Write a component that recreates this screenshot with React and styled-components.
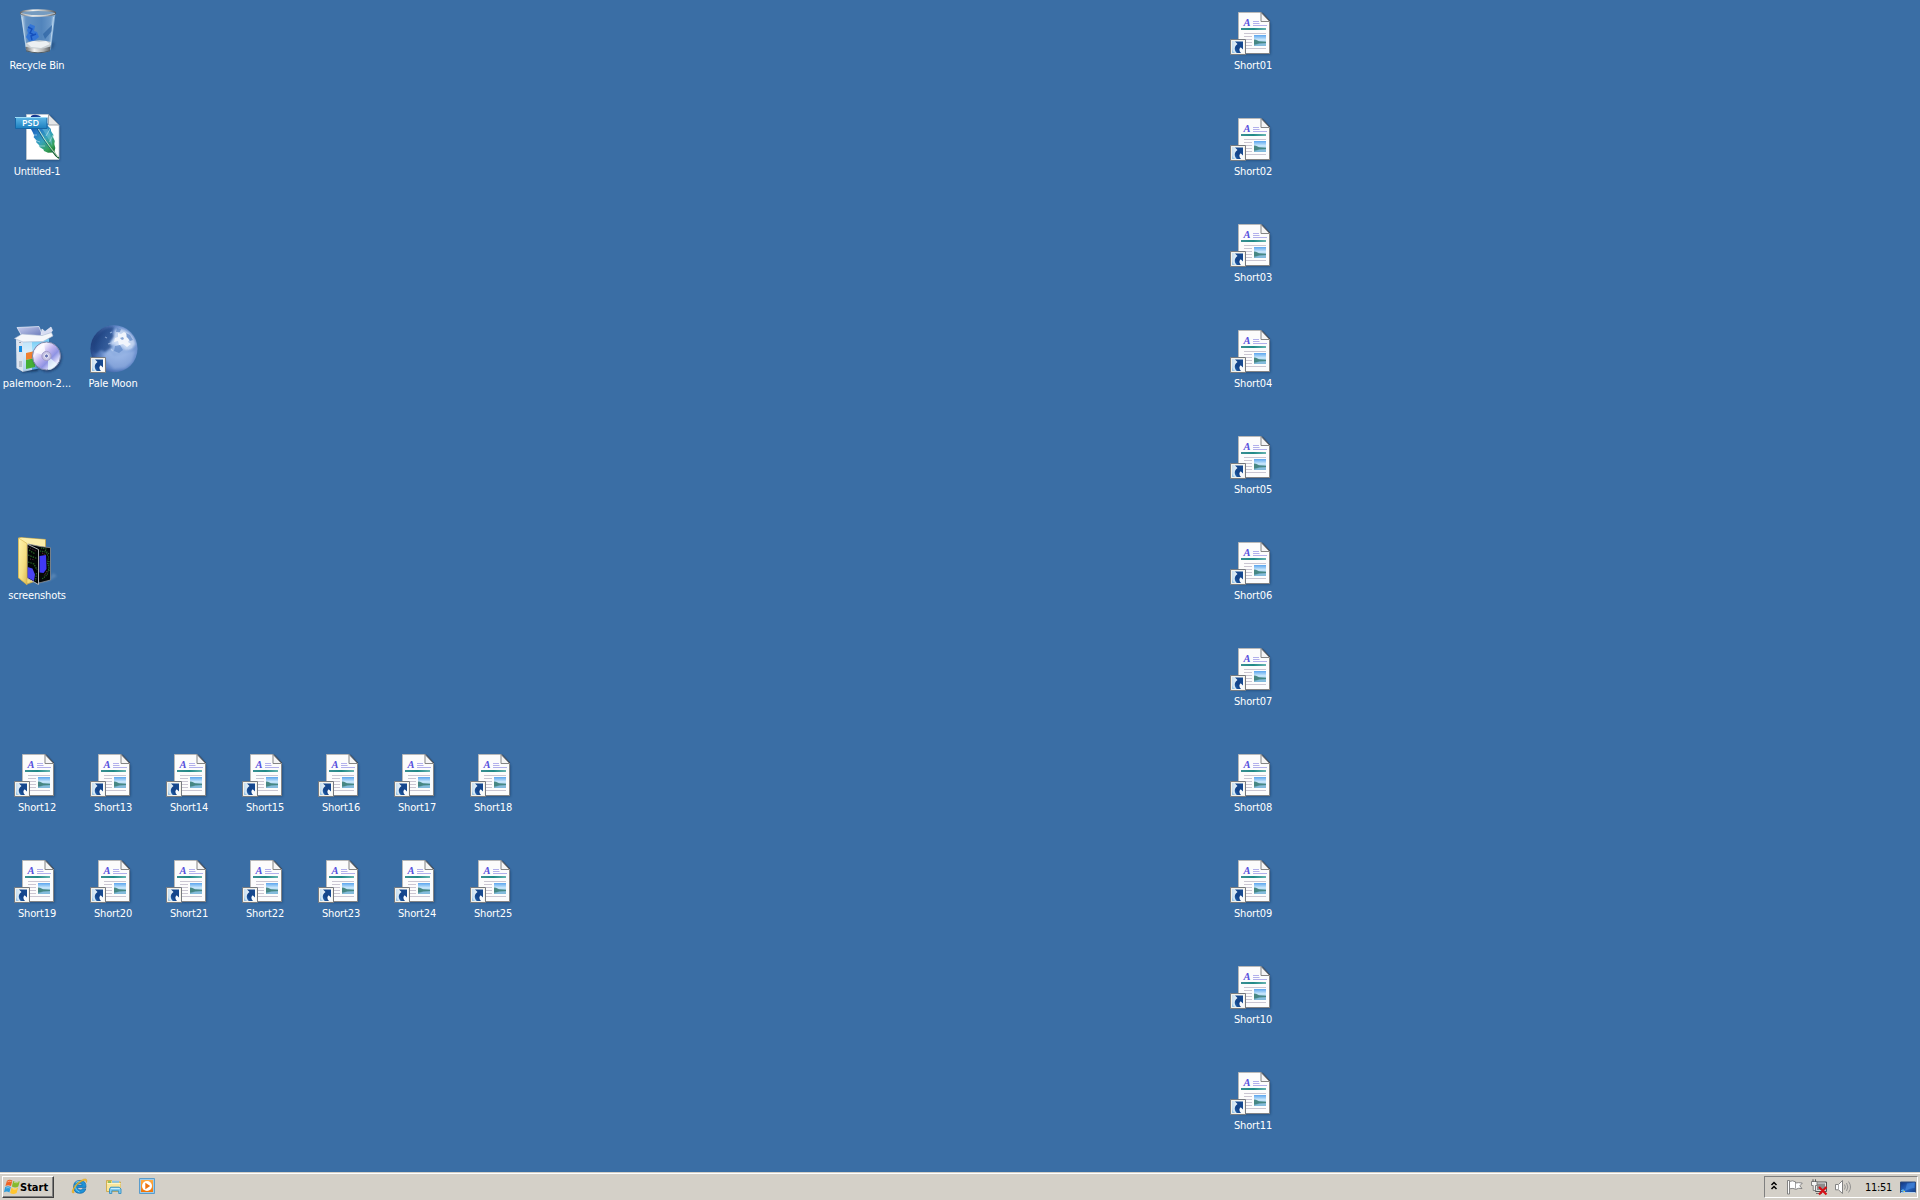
import React from "react";
import styled, { createGlobalStyle } from "styled-components";

const GlobalStyle = createGlobalStyle`
  *, *::before, *::after { box-sizing: border-box; }
  body { margin: 0; overflow: hidden; background: #3a6ea5; }
`;

const Screen = styled.div`
  display: flex;
  flex-direction: column;
  width: 1920px;
  height: 1200px;
  background: #3a6ea5;
  font-family: "DejaVu Sans Condensed", "DejaVu Sans", sans-serif;
  font-size: 11px;
  user-select: none;
`;

const Desktop = styled.main`
  flex: 1;
  min-height: 0;
  display: grid;
  grid-template-columns: repeat(25, 76px);
  grid-template-rows: repeat(11, 106px);
`;

const Shortcut = styled.div`
  grid-column: ${(p) => p.$col};
  grid-row: ${(p) => p.$row};
  display: flex;
  flex-direction: column;
  align-items: center;
  padding-top: 7px;
`;

const IconSvg = styled.svg`
  display: block;
  flex: none;
  width: 48px;
  height: 48px;
  overflow: visible;
`;

const Label = styled.span`
  margin: 4px 2px 0 0;
  color: #fff;
  line-height: 14px;
  white-space: nowrap;
  letter-spacing: ${(p) => p.$spacing ?? -0.15}px;
`;

const Taskbar = styled.footer`
  flex: none;
  height: 28px;
  display: flex;
  align-items: flex-start;
  padding: 3px 2px 0;
  background: #d4d0c8;
  border-top: 1px solid #d4d0c8;
  box-shadow: inset 0 1px 0 #fff;
`;

const StartButton = styled.button`
  display: flex;
  align-items: center;
  width: 52px;
  height: 22px;
  padding: 0 0 0 1px;
  background: #d4d0c8;
  border: 1px solid;
  border-color: #fff #404040 #404040 #fff;
  box-shadow: inset -1px -1px 0 #808080;
  color: #000;
  font: bold 11px "DejaVu Sans Condensed", "DejaVu Sans", sans-serif;
  letter-spacing: 0;
`;

const QuickLaunch = styled.nav`
  display: flex;
  align-items: center;
  gap: 17.5px;
  height: 22px;
  padding-bottom: 2px;
  margin-left: 18px;
`;

const SmallSvg = styled.svg`
  display: block;
  flex: none;
  width: ${(p) => p.$w ?? 16}px;
  height: 16px;
  overflow: visible;
`;

const Tray = styled.div`
  display: flex;
  align-items: center;
  width: 154px;
  height: 22px;
  margin-left: auto;
  padding-left: 5px;
  border: 1px solid;
  border-color: #808080 #fff #fff #808080;
`;

const TrayIcons = styled.div`
  display: flex;
  align-items: center;
  gap: 8px;
`;

const Clock = styled.time`
  margin-left: 14px;
  width: 28px;
  color: #000;
  line-height: 14px;
  padding-top: 1px;
  white-space: nowrap;
  letter-spacing: -0.3px;
`;

const ShowDesktop = styled.div`
  margin-left: 7px;
`;

const DefsSvg = styled.svg`
  position: absolute;
`;

function Defs() {
  return (
    <DefsSvg width="0" height="0" aria-hidden="true">
      <defs>
        <linearGradient id="glass" x1="0" x2="1">
          <stop offset="0" stopColor="#d7e8f6" stopOpacity=".8" />
          <stop offset=".18" stopColor="#81aad4" stopOpacity=".7" />
          <stop offset=".6" stopColor="#5e91c9" stopOpacity=".6" />
          <stop offset="1" stopColor="#a9cbea" stopOpacity=".8" />
        </linearGradient>
        <linearGradient id="metal" x1="0" x2="1">
          <stop offset="0" stopColor="#666b70" />
          <stop offset=".35" stopColor="#f4f4f2" />
          <stop offset=".7" stopColor="#b1b4b5" />
          <stop offset="1" stopColor="#555b61" />
        </linearGradient>
        <linearGradient id="teal" x1="0" x2="1">
          <stop offset="0" stopColor="#3a8f92" />
          <stop offset=".5" stopColor="#208a87" />
          <stop offset="1" stopColor="#65b5b0" />
        </linearGradient>
        <linearGradient id="photo" x1="0" y1="0" x2="0" y2="1">
          <stop offset="0" stopColor="#5aa5ee" />
          <stop offset=".45" stopColor="#cdeafc" />
          <stop offset=".62" stopColor="#9ccbe8" />
          <stop offset="1" stopColor="#6aaee0" />
        </linearGradient>
        <linearGradient id="banner" x1="0" y1="0" x2="0" y2="1">
          <stop offset="0" stopColor="#5cb6e6" />
          <stop offset="1" stopColor="#1c7fbf" />
        </linearGradient>
        <linearGradient id="feather" x1=".1" y1="0" x2=".7" y2="1">
          <stop offset="0" stopColor="#12308a" />
          <stop offset=".35" stopColor="#2479c6" />
          <stop offset=".58" stopColor="#36a3bb" />
          <stop offset=".8" stopColor="#35a05a" />
          <stop offset="1" stopColor="#0f5c22" />
        </linearGradient>
        <linearGradient id="arrow" x1="1" y1="0" x2="0" y2="1">
          <stop offset="0" stopColor="#164a91" />
          <stop offset=".65" stopColor="#144489" />
          <stop offset="1" stopColor="#246ab6" />
        </linearGradient>
        <linearGradient id="arrowTile">
          <stop offset="0" stopColor="#bcd8ee" />
          <stop offset=".6" stopColor="#f8fbfd" />
        </linearGradient>
        <radialGradient id="moon" cx=".58" cy=".45" r=".62">
          <stop offset="0" stopColor="#a4c0ea" />
          <stop offset=".45" stopColor="#80a2da" />
          <stop offset=".78" stopColor="#6388c8" />
          <stop offset="1" stopColor="#34599c" />
        </radialGradient>
        <linearGradient id="moonShade" x1="0" y1=".2" x2=".9" y2=".6">
          <stop offset="0" stopColor="#0f2860" stopOpacity=".9" />
          <stop offset=".5" stopColor="#28569c" stopOpacity="0" />
        </linearGradient>
        <linearGradient id="disc" x1="0" y1="0" x2="1" y2="1">
          <stop offset="0" stopColor="#a69de7" />
          <stop offset=".25" stopColor="#f9f5ff" />
          <stop offset=".45" stopColor="#c0b4ef" />
          <stop offset=".62" stopColor="#8e93e3" />
          <stop offset=".8" stopColor="#e9e9ff" />
          <stop offset="1" stopColor="#a1b8ee" />
        </linearGradient>
        <linearGradient id="box" x1="0" y1="0" x2="0" y2="1">
          <stop offset="0" stopColor="#65c6f3" />
          <stop offset=".45" stopColor="#bae9ff" />
          <stop offset="1" stopColor="#4c9bd8" />
        </linearGradient>
        <linearGradient id="flap" x1="0" y1="0" x2="1" y2="1">
          <stop offset="0" stopColor="#c9d0f0" />
          <stop offset="1" stopColor="#5f70b4" />
        </linearGradient>
        <linearGradient id="folder" x1="0" y1="0" x2="1" y2="1">
          <stop offset="0" stopColor="#fff3ae" />
          <stop offset=".6" stopColor="#f5df83" />
          <stop offset="1" stopColor="#dcb84e" />
        </linearGradient>
        <linearGradient id="screenBlue" x1="0" y1="0" x2="1" y2="1">
          <stop offset="0" stopColor="#12347c" />
          <stop offset=".55" stopColor="#2768c8" />
          <stop offset="1" stopColor="#153d80" />
        </linearGradient>
        <linearGradient id="media" x1="0" y1="0" x2="0" y2="1">
          <stop offset="0" stopColor="#ffad45" />
          <stop offset="1" stopColor="#f17407" />
        </linearGradient>
        <filter id="soft" x="-30%" y="-30%" width="160%" height="160%">
          <feGaussianBlur stdDeviation=".8" />
        </filter>
      </defs>
    </DefsSvg>
  );
}

function ShortcutArrow() {
  return (
    <g>
      <path d="M.5 32.500h15v15H.5z" fill="url(#arrowTile)" stroke="#777b80" />
      <path d="M1.500 33.500h13v13h-13z" fill="none" stroke="#f6f3ea" />
      <path d="M5 34.500h8v8l-2.300-2.300c-1.800 1.500-1.800 3.500.3 5.800H6.800C4 43.300 4 39.500 7.500 37z" fill="url(#arrow)" />
      <path d="M2 40.500c.2 3.200 1.200 5 4 5.500H2z" fill="#99c5e7" />
    </g>
  );
}

function DocumentIcon() {
  return (
    <IconSvg viewBox="0 0 48 48">
      <path d="M10 7h23l7.500 9v31.500H10z" fill="#173459" opacity=".6" filter="url(#soft)" />
      <path d="M8.500 5.500H31l8.500 9v32h-31z" fill="#fcfcfc" stroke="#b8b8b8" />
      <path d="M8 46.500h32M39.500 15v32" stroke="#858585" />
      <path d="M31 5.500v9h8.500z" fill="#f5f5f5" stroke="#858585" />
      <path d="M32 5.500l8 8.500" stroke="#3c4654" strokeWidth=".9" />
      <text x="13.500" y="19" fill="#564fdc" fontFamily="Liberation Serif, serif" fontSize="10.500" fontStyle="italic" fontWeight="bold">A</text>
      <path d="M23 14.500h6M23 16.500h6.500M23 18.500h14" stroke="#a9a7ea" strokeWidth=".9" />
      <rect x="11" y="21" width="25" height="2" fill="url(#teal)" />
      <path d="M14 26.500h22M14 29.500h8M14 32.500h8M14 35.500h8M14 38.500h8M16 41.500h20" stroke="#cac6d2" />
      <rect x="24" y="28" width="12" height="11" fill="url(#photo)" />
      <path d="M24 32.500l2 .2 3 1.500 7 .6v1.400l-7 .6-5 2z" fill="#3d8078" opacity=".9" />
      <path d="M24 37.500l5-1 7-.3v2.800H24z" fill="#8cc0d8" opacity=".6" />
      <ShortcutArrow />
    </IconSvg>
  );
}

function RecycleIcon() {
  return (
    <IconSvg viewBox="0 0 48 48">
      <path d="M34 41l5 1 2-6-3-1z" fill="#204b7b" opacity=".6" filter="url(#soft)" />
      <path d="M6.500 6L12 43q1 3 12.500 3T37 42L41.500 6z" fill="url(#glass)" />
      <path d="M10 8h28l-4 33H14z" fill="#5487bd" opacity=".4" />
      <path d="M38 18l-9 9 2 5 7-8z" fill="#285f9f" opacity=".65" />
      <path d="M16 17l5 2-1 5 3 1 2 5-5 4h-5l-3-4 2-4-1-3z" fill="#2f72d8" opacity=".9" />
      <path d="M14 20l4 2-2 4 4 2M18 33l-1-4 5-2" fill="none" stroke="#1550bd" strokeWidth="1.400" />
      <path d="M12 36q12-5 25-1l-1 7q-3 3-12 3t-12-3z" fill="#c8cfd3" />
      <path d="M13 36l7-2 5 1 7-1 4 3-9 4-10-1z" fill="#f0f3f5" opacity=".9" />
      <path d="M11.500 39.500q12.500 4.500 25 0l-.6 4.500q-11.700 4-23.400 0z" fill="url(#metal)" />
      <path d="M12 43.800q12 4 24 0" fill="none" stroke="#525e66" />
      <ellipse cx="24" cy="6" rx="17.300" ry="2.900" fill="#759bc0" stroke="url(#metal)" strokeWidth="1.800" />
      <path d="M7 6.500q17 5 34-.2" stroke="#d9dddf" strokeWidth=".7" fill="none" />
      <path d="M8 10l4 30M39.500 10l-3 28" stroke="#d7ebf9" strokeWidth=".8" opacity=".8" />
    </IconSvg>
  );
}

function PsdIcon() {
  return (
    <IconSvg viewBox="0 0 48 48">
      <path d="M13 3h24l9 11v33.500H13z" fill="#173459" opacity=".6" filter="url(#soft)" />
      <path d="M12.500 1.500h22l10.500 10.500v34.500H12.500z" fill="#fff" stroke="#c3cad0" strokeWidth=".8" />
      <path d="M34.500 1.500V12H45z" fill="#e4e6e8" stroke="#8b929b" strokeWidth=".8" />
      <path d="M17 3q3-2 8-.5 4 2 6 5.500l3 3-.5 1.500L37 16l0 2 2.500 4-.5 2 1.800 4-.5 3 1 4-.8 3.500q2 4 5 6.500l-1 .8q-4-3-6-6.300l-4.500.2-4-1.600-.5-1.500-4-2.500-.5-2-3-3 .5-1.500-3-3.500.8-1.200-1.500-3.500Q14.500 14 17 3z" fill="url(#feather)" />
      <path d="M29 10q9 9 9.500 24Q33 22 26 13z" fill="#83cfe6" opacity=".4" />
      <path d="M20 9q7 17 24 35.500" fill="none" stroke="#0f4a6a" strokeWidth=".9" opacity=".7" />
      <path d="M21 9q7 16 23 35" fill="none" stroke="#e6f6d0" strokeWidth=".8" />
      <path d="M36 16l-4 7M39 22l-3.500 7M18 22l5 0M20 27l6 2M24 33l7 0" stroke="#e2f5f8" strokeWidth=".7" opacity=".7" />
      <path d="M1.500 4.500h31.500v11h-31.500z" fill="url(#banner)" stroke="#1766a5" />
      <path d="M1 4.500h32" stroke="#9edcf7" />
      <text x="8" y="13.200" fill="#fff" fontFamily="Open Sans, sans-serif" fontSize="9" fontWeight="600" textLength="17">PSD</text>
    </IconSvg>
  );
}

function InstallerIcon() {
  return (
    <IconSvg viewBox="0 0 48 48">
      <path d="M6 13L24 14v32L8 47.500z" fill="#183961" filter="url(#soft)" />
      <path d="M3 2.500L25 1.500l3.500 9L9 13z" fill="url(#flap)" stroke="#eef0fb" strokeWidth=".7" />
      <path d="M27 10l1-6 3 2.500L37 2l1.500 3.500L35 10z" fill="#d7dcf2" stroke="#f4f5fc" strokeWidth=".6" />
      <path d="M3 14l7-1 25 1v28l-18 3-8 1z" fill="url(#box)" />
      <path d="M2 13l7 3v31l-6.500-4z" fill="#dce4ef" />
      <path d="M9 16v31l9-2V17z" fill="#eef4fb" opacity=".6" />
      <path d="M.5 13.500L8 9l20 1.500 9.500-3 1.500 3.500-10 5.500-20 .5z" fill="#f5f7fa" stroke="#a7b7d2" strokeWidth=".6" />
      <path d="M5 21h3v6H5z" fill="#148ce1" />
      <path d="M5 17.500h2M5 37h3M5 39h3M5 41h3" stroke="#818a9a" strokeWidth=".8" />
      <path d="M12 28l9-2v7l-9 2z" fill="#f0802f" />
      <path d="M12 35l9-2v9l-9 2z" fill="#45af35" />
      <circle cx="33.500" cy="32.500" r="14.200" fill="#1b3764" opacity=".8" filter="url(#soft)" />
      <circle cx="32.500" cy="31" r="14" fill="url(#disc)" stroke="#7f88a8" />
      <path d="M20 27q3-8 10-9l2 13z" fill="#fff" opacity=".7" />
      <path d="M34 31l9 8q-4 6-9 6z" fill="#ebfcff" opacity=".7" />
      <circle cx="32.500" cy="31" r="4.600" fill="#c6c2e4" stroke="#9f9bc6" />
      <circle cx="32.500" cy="31" r="2" fill="#626db1" stroke="#fff" strokeWidth=".8" />
    </IconSvg>
  );
}

function MoonIcon() {
  return (
    <IconSvg viewBox="0 0 48 48">
      <circle cx="24" cy="23.800" r="23.500" fill="url(#moon)" />
      <path d="M8 9q8-8 16-7l-2 6 3 3-5 6 2 5-7 5-4-2-6 4-3-4q0-10 6-16z" fill="#1f4484" opacity=".75" filter="url(#soft)" />
      <path d="M25 5q7-3 13 2 6 5 7.500 12l-4 5-6 1-4-4-5 1-2-3-5 1 3-5 1-3z" fill="#dfeafb" opacity=".7" filter="url(#soft)" />
      <path d="M28 8l3 1 3-2 3 2-1 3 4 2-2 3 3 2-4 3-4-3-4 1-1-4-4 1 1-4 3-1z" fill="#fff" opacity=".75" />
      <path d="M25 21l5-1 3 5-4 3-5-2zM36 8l4 2 3 5-3 1-3-4zM27 3l4 1-1 3-4 0zM30 13l3-1 1 2-2 1z" fill="#5d86c4" opacity=".7" />
      <path d="M12 29l8-3 4 5 6-1 6-3 9-1-3 11-7 6-11 1-6-6z" fill="#b4caf2" opacity=".35" filter="url(#soft)" />
      <path d="M15 12l2 1M18 19l3-1M21 24l2 2M38 24l4-2M20 8l2-1" fill="none" stroke="#b9d0f0" strokeWidth="1.200" opacity=".8" />
      <circle cx="24" cy="23.800" r="23.500" fill="url(#moonShade)" />
      <ShortcutArrow />
    </IconSvg>
  );
}

function FolderIcon() {
  return (
    <IconSvg viewBox="0 0 48 48">
      <path d="M23 46l12-4 4-6 4 3-8 5z" fill="#6a94c0" opacity=".6" filter="url(#soft)" />
      <path d="M4.500 1l2-.5L31.500 2.500v38L13 47 4.500 41z" fill="url(#folder)" stroke="#c8a84b" strokeWidth=".8" />
      <path d="M7 .8l24 2v8L13 7z" fill="#fbeeaa" />
      <path d="M14 7l12.500 2.500 10 1.200V43L25 46z" fill="#050807" stroke="#8d9297" strokeWidth=".8" />
      <path d="M25.500 19l6.500-1 .5 14-3 4-4-.5z" fill="#3f39f6" />
      <path d="M26 14l6 1 2.500 5-1 6 1.500 5-2 7-5 4M31 13l4 4M35 24v10M27 11l6 1" fill="none" stroke="#2a6b2c" strokeWidth="1.100" strokeDasharray="1.200 1" />
      <path d="M28 16l4 2M33 34l-3 5" stroke="#7a3446" strokeDasharray="1 1" />
      <path d="M13 7l11.500 5.500V47.500L13 41z" fill="#020505" stroke="#c2c4c6" strokeWidth=".9" />
      <path d="M13.500 30l5 1.500 2.500 6-1 6.500-6.500-3.500z" fill="#4a44f4" />
      <path d="M14 18l9 3.500M15 13l6 4M14 25l6 2 3 6M22.500 36l-1 8" fill="none" stroke="#2a6726" strokeWidth="1.200" strokeDasharray="1.500 1" />
      <path d="M14 10l8 4M16 22l5 1" stroke="#63303f" strokeDasharray="1 1.500" />
      <path d="M4.500 1L13 6.500V48l-8.500-7.500z" fill="url(#folder)" stroke="#d0ae4c" strokeWidth=".6" />
    </IconSvg>
  );
}

function WindowsFlag() {
  return (
    <SmallSvg viewBox="0 0 16 16">
      <path d="M3 1.800Q5.500 0 8.400 1.600L7 7.100Q4.200 5.600 1.400 7z" fill="#ee6325" />
      <path d="M9.200 2.100q3.300 1.800 6.600.1l-1.500 5.400q-3 1.700-6.400 0z" fill="#86b92e" />
      <path d="M1.200 7.900q2.900-1.400 5.600.1l-1.400 5.400Q2.800 11.900 0 13.300z" fill="#2d9cdb" />
      <path d="M7.600 8.500q3.200 1.800 6.500.1l-1.500 5.300q-3.200 1.900-6.500.1z" fill="#ffc52f" />
      <path d="M3.500 2.800q2-1 4-.2M10 3.300q2 .8 4.300.2M2.200 9q2-1 3.600 0M8.500 9.700q2 .8 4.300.1" fill="none" stroke="#fff" strokeWidth=".7" opacity=".6" />
    </SmallSvg>
  );
}

function ExplorerIcon() {
  return (
    <SmallSvg viewBox="0 0 16 16">
      <path d="M14 9.400H5.300q.4 2.600 2.900 2.600 1.600 0 2.300-1.200h3.300Q12.600 15.300 8 15.300 1.600 15.300 1.600 8.900 1.600 2.400 8.100 2.400q6.200 0 5.900 7zM5.400 7.100h4.900Q9.800 5.200 8 5.200 5.900 5.200 5.400 7.100z" fill="#1e93d8" stroke="#0a62a8" strokeWidth=".7" />
      <path d="M3.800 4.500Q6 2.900 9 3.400M3.200 7q.3 6 4.300 7" stroke="#77d3f7" fill="none" />
      <path d="M2.200 14.800Q-1 15.700.7 11.500 4 4.200 11.500 1.200 15.900-.2 14.500 4.500 14.500 1.800 11.800 2.500 5.800 4.600 2.600 10.300 1 13.600 2.200 14.800z" fill="#f4bd26" stroke="#d39310" strokeWidth=".4" />
    </SmallSvg>
  );
}

function LibraryIcon() {
  return (
    <SmallSvg viewBox="0 0 16 16">
      <path d="M.5 2.500h5L7 4h7.500v9.500H.5z" fill="#f4d573" stroke="#c9a443" strokeWidth=".8" />
      <path d="M6 2.800h7v2H6z" fill="#8cc5e8" />
      <path d="M2 3.300h3v1.500H2z" fill="#73b957" />
      <path d="M1 5.500h13.500v7.500H1z" fill="#fbe69a" />
      <path d="M1 5.500h13.500" stroke="#fff6c8" />
      <path d="M3.500 15.500v-4.500l1.200-1.800h8.600l1.700 1.800v4.500h-2.300v-2.700H5.800v2.700z" fill="#81cbee" stroke="#348fc3" strokeWidth=".9" />
      <path d="M4.800 10.500h9" stroke="#d9f6ff" strokeWidth=".8" />
    </SmallSvg>
  );
}

function MediaIcon() {
  return (
    <SmallSvg viewBox="0 0 16 16">
      <path d="M.5.5h15v15H.5z" fill="#9ccbea" stroke="#5a9ccc" />
      <path d="M2 2h12v12H2z" fill="url(#media)" />
      <circle cx="8" cy="8" r="5" fill="#fff" />
      <path d="M6.300 4.800L11.200 8l-4.900 3.200z" fill="#ef7510" />
    </SmallSvg>
  );
}

function TrayChevron() {
  return (
    <SmallSvg $w={9} viewBox="0 0 9 16">
      <path d="M1.500 6L4 3.500 6.500 6M1.500 10L4 7.500 6.500 10" stroke="#000" strokeWidth="1.500" fill="none" />
    </SmallSvg>
  );
}

function FlagIcon() {
  return (
    <SmallSvg viewBox="0 0 16 16">
      <path d="M.5 1.500h2v13.500h-2z" fill="#fff" stroke="#777" strokeWidth=".9" />
      <path d="M2.500 2.500q3-1.500 6 .3V4q3-.8 6.800.1L12.800 6.800 15 9.500q-4-.8-6 .8-3-1.500-6.500-.5z" fill="#fff" stroke="#7b7b7b" strokeWidth=".9" />
      <path d="M8.500 4v5.500" stroke="#999" strokeWidth=".9" />
    </SmallSvg>
  );
}

function NetworkIcon() {
  return (
    <SmallSvg viewBox="0 0 16 16">
      <path d="M4.500 3h11v9.500h-11z" fill="#8d8d8d" stroke="#555" />
      <path d="M5.500 4h9v7.500h-9z" fill="none" stroke="#ececec" strokeWidth=".9" />
      <path d="M.5 2.500h5.500v4H4.500v5H2.200v-5H.5z" fill="#f3f3f3" stroke="#777" strokeWidth=".9" />
      <path d="M2 .3v2.500M4.500.3v2.500" stroke="#555" />
      <path d="M5 14.500h6" stroke="#777" />
      <path d="M8 8l7.500 7.500M15.500 8L8 15.500" stroke="#d61016" strokeWidth="2.200" />
    </SmallSvg>
  );
}

function SpeakerIcon() {
  return (
    <SmallSvg viewBox="0 0 16 16">
      <path d="M.5 5.500h3L7.500 1.500v13L3.500 10.800h-3z" fill="#fff" stroke="#777" strokeWidth=".9" />
      <path d="M3.500 5.500v5" stroke="#aaa" />
      <path d="M9.500 5.500q1.600 2.500 0 5M11.500 4q2.700 4 0 8M13.500 2.500q4 5.500 0 11" fill="none" stroke="#8a8a8a" strokeWidth=".9" />
    </SmallSvg>
  );
}

function DesktopIcon() {
  return (
    <SmallSvg viewBox="0 0 16 16">
      <path d="M.5 3h15v10.500H.5z" fill="url(#screenBlue)" stroke="#2c4a7c" />
      <path d="M7 4.500l7.500-1v5.500Q11 9 5 12z" fill="#4b8bdb" opacity=".6" />
      <path d="M1 13.500h14.500" stroke="#b7d3ee" />
      <path d="M1 11.500h3.500M3 10v3.500" stroke="#5fb2e0" />
      <path d="M3.500 12.500h1.500" stroke="#e7ce57" />
    </SmallSvg>
  );
}

const namedItems = [
  { name: "Recycle Bin", col: 1, row: 1, Icon: RecycleIcon, spacing: -0.2 },
  { name: "Untitled-1", col: 1, row: 2, Icon: PsdIcon, spacing: -0.25 },
  { name: "palemoon-2...", col: 1, row: 4, Icon: InstallerIcon },
  { name: "Pale Moon", col: 2, row: 4, Icon: MoonIcon },
  { name: "screenshots", col: 1, row: 6, Icon: FolderIcon },
].map((item) => (item.name.startsWith("palemoon") ? { ...item, spacing: 0 } : item));

const documents = Array.from({ length: 25 }, (_, i) => {
  const name = `Short${String(i + 1).padStart(2, "0")}`;
  if (i < 11) return { name, col: 17, row: i + 1, Icon: DocumentIcon };
  const n = i - 11;
  return { name, col: (n % 7) + 1, row: 8 + Math.floor(n / 7), Icon: DocumentIcon };
});

export default function App() {
  return (
    <>
      <GlobalStyle />
      <Defs />
      <Screen>
        <Desktop>
          {[...namedItems, ...documents].map(({ name, col, row, Icon, spacing }) => (
            <Shortcut key={name} $col={col} $row={row}>
              <Icon />
              <Label $spacing={spacing}>{name}</Label>
            </Shortcut>
          ))}
        </Desktop>
        <Taskbar>
          <StartButton><WindowsFlag />Start</StartButton>
          <QuickLaunch>
            <ExplorerIcon />
            <LibraryIcon />
            <MediaIcon />
          </QuickLaunch>
          <Tray>
            <TrayIcons>
              <TrayChevron />
              <FlagIcon />
              <NetworkIcon />
              <SpeakerIcon />
            </TrayIcons>
            <Clock>11:51</Clock>
            <ShowDesktop><DesktopIcon /></ShowDesktop>
          </Tray>
        </Taskbar>
      </Screen>
    </>
  );
}
